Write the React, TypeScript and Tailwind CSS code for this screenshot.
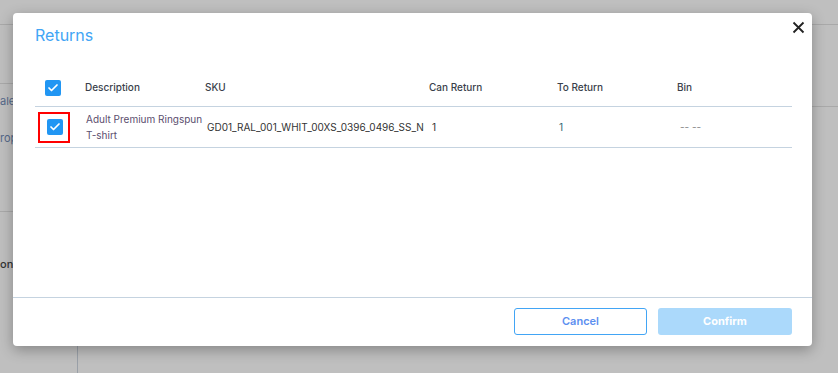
import { Check } from "lucide-react"

const font = { fontFamily: "Inter, 'Noto Sans', sans-serif" }

function Box() {
  return (
    <span className="flex h-4 w-4 items-center justify-center rounded-[2px] bg-[#2196f3]">
      <Check className="h-3 w-3 text-white" strokeWidth={3.5} />
    </span>
  )
}

// page behind the modal: only slivers of it show
function Backdrop() {
  return (
    <div className="flex h-full w-full flex-col text-[11px]">
      <div className="h-[25px] border-b border-[#a9a9a9]" />
      <div className="flex flex-1">
        <div className="flex w-[78px] flex-col border-r border-[#9aa0a8]">
          <div className="h-[59px] border-b border-[#a9a9a9]" />
          <div className="h-[37px] pt-[9px] text-[#55698a]">ale</div>
          <div className="h-[91px] border-b border-[#a9a9a9] pt-[9px] text-[#55698a]">rop</div>
          <div className="pt-[44px] font-medium text-[#333]">on</div>
        </div>
        <div className="flex-1">
          <div className="h-[82px] border-b border-[#a9a9a9]" />
        </div>
      </div>
    </div>
  )
}

export default function App() {
  return (
    <div className="relative h-[373px] w-[838px] overflow-hidden bg-[#bfbfbf]" style={font}>
      <Backdrop />
      <div className="absolute left-[13px] top-[13px] flex h-[333px] w-[799px] flex-col rounded-[4px] bg-white shadow-[0_4px_14px_rgba(0,0,0,0.3)]">
        <div className="flex items-start justify-between pl-[22px] pr-[7px]">
          <h2 className="pt-[10px] text-[16px] font-normal text-[#42a5f5]">Returns</h2>
          <button className="pt-[8px] text-[#222]">
            <svg width="13" height="13" viewBox="0 0 13 13">
              <path d="M1.5 1.5 L11.5 11.5 M11.5 1.5 L1.5 11.5" stroke="currentColor" strokeWidth="1.8" />
            </svg>
          </button>
        </div>

        <div className="mt-[29px] flex-1 pl-[22px] pr-[20px]">
          <div className="grid h-[31px] grid-cols-[50px_120px_224px_128px_120px_1fr] items-center border-b border-[#c5d3e0] pb-[7px] text-[10px] font-medium text-[#3a3f4b]">
            <div className="pl-[10px]"><Box /></div>
            <div>Description</div>
            <div>SKU</div>
            <div>Can Return</div>
            <div>To Return</div>
            <div>Bin</div>
          </div>
          <div className="grid h-[41px] grid-cols-[50px_120px_224px_128px_120px_1fr] items-center border-b border-[#c5d3e0] text-[10px]">
            <div className="pl-[3px]">
              <div className="flex h-[31px] w-[32px] items-center justify-center border-2 border-[#ff0000] pl-[1px]">
                <Box />
              </div>
            </div>
            <div className="pl-[1px] leading-[16px] text-[#5b4e6e]">Adult Premium Ringspun T-shirt</div>
            <div className="whitespace-nowrap pl-[2px] text-[#333]">GD01_RAL_001_WHIT_00XS_0396_0496_SS_N</div>
            <div className="pl-[3px] text-[#333]">1</div>
            <div className="pl-[2px] text-[#2f6670]">1</div>
            <div className="pl-[3px] text-[#888]">-- --</div>
          </div>
        </div>

        <div className="flex justify-end gap-[11px] border-t border-[#c5d3e0] pb-[11px] pl-[22px] pr-[20px] pt-[10px]">
          <button className="h-[27px] w-[133px] rounded-[3px] border border-[#42a5f5] text-[11px] font-semibold text-[#5c8ff0]">
            Cancel
          </button>
          <button className="h-[27px] w-[134px] rounded-[3px] bg-[#abd9fb] text-[11px] font-bold text-white">
            Confirm
          </button>
        </div>
      </div>
    </div>
  )
}
